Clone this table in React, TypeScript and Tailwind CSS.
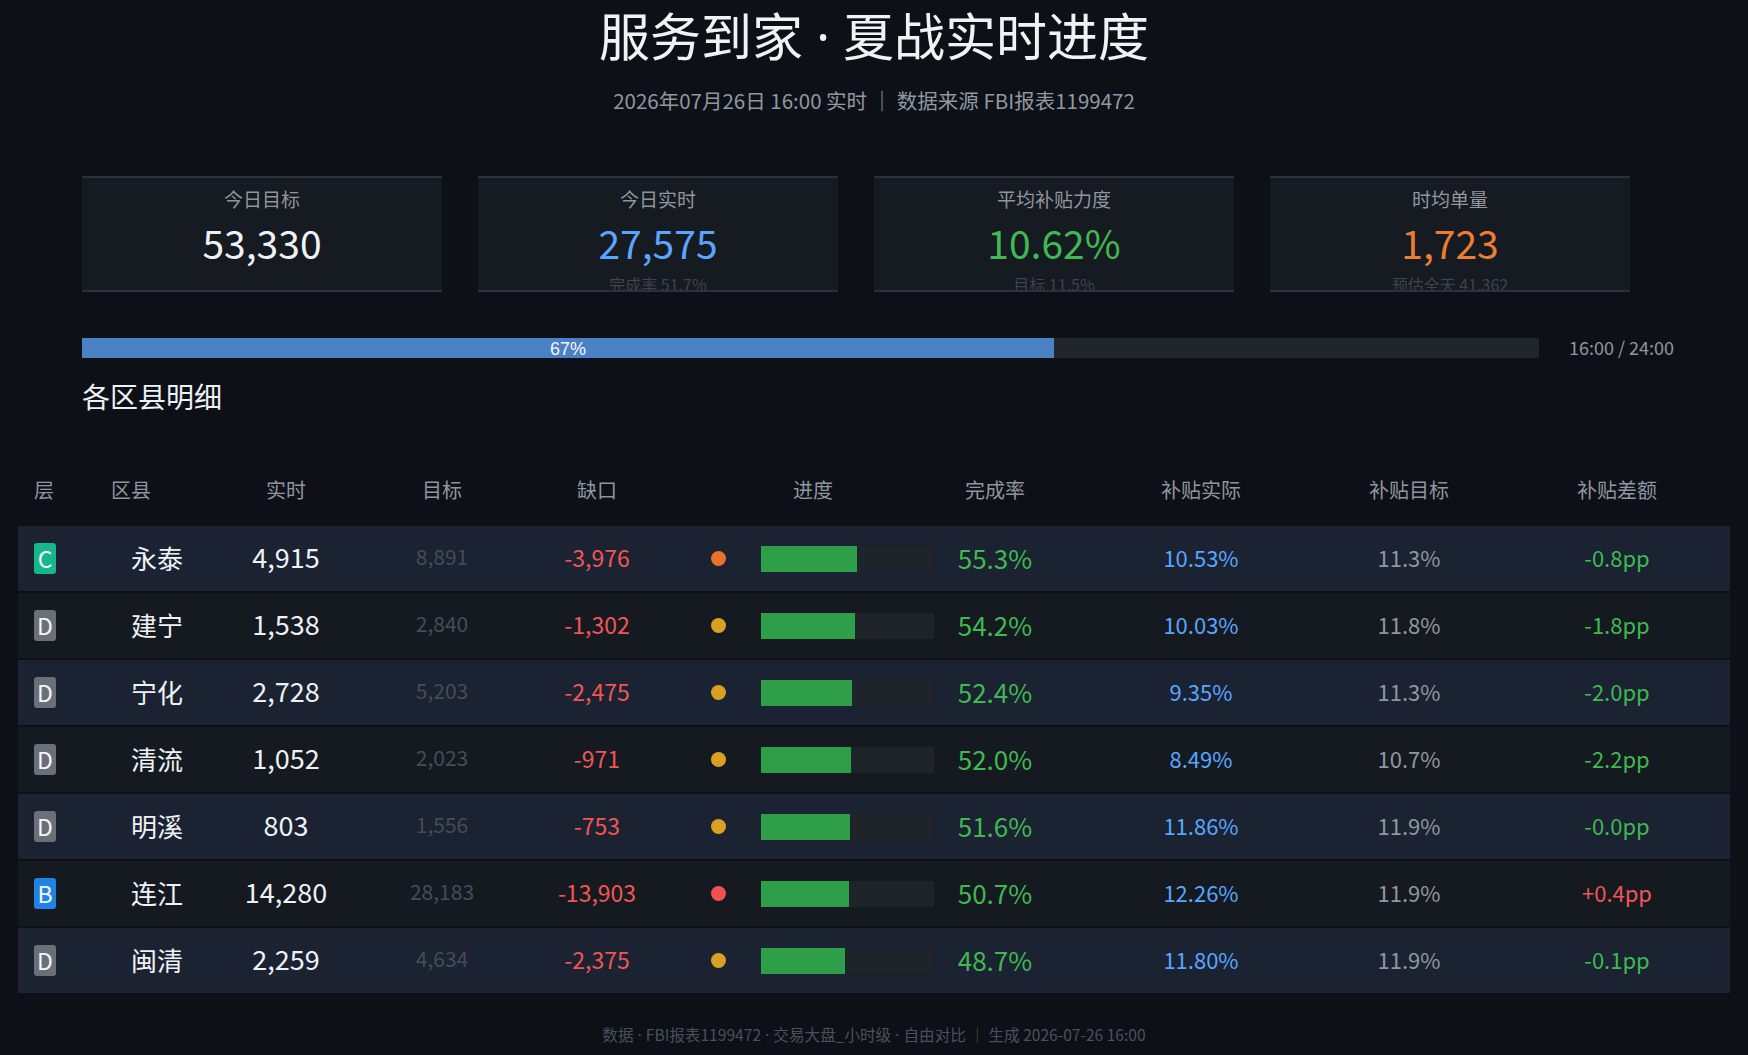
import React from "react";

type Row = {
  tier: "B" | "C" | "D";
  name: string;
  actual: string;
  target: string;
  gap: string;
  dot: string;
  rate: number;
  subActual: string;
  subTarget: string;
  subDiff: string;
  diffUp: boolean;
};

const rows: Row[] = [
  { tier: "C", name: "永泰", actual: "4,915", target: "8,891", gap: "-3,976", dot: "bg-[#e8732a]", rate: 55.3, subActual: "10.53%", subTarget: "11.3%", subDiff: "-0.8pp", diffUp: false },
  { tier: "D", name: "建宁", actual: "1,538", target: "2,840", gap: "-1,302", dot: "bg-[#d9a022]", rate: 54.2, subActual: "10.03%", subTarget: "11.8%", subDiff: "-1.8pp", diffUp: false },
  { tier: "D", name: "宁化", actual: "2,728", target: "5,203", gap: "-2,475", dot: "bg-[#d9a022]", rate: 52.4, subActual: "9.35%", subTarget: "11.3%", subDiff: "-2.0pp", diffUp: false },
  { tier: "D", name: "清流", actual: "1,052", target: "2,023", gap: "-971", dot: "bg-[#d9a022]", rate: 52.0, subActual: "8.49%", subTarget: "10.7%", subDiff: "-2.2pp", diffUp: false },
  { tier: "D", name: "明溪", actual: "803", target: "1,556", gap: "-753", dot: "bg-[#d9a022]", rate: 51.6, subActual: "11.86%", subTarget: "11.9%", subDiff: "-0.0pp", diffUp: false },
  { tier: "B", name: "连江", actual: "14,280", target: "28,183", gap: "-13,903", dot: "bg-[#f45050]", rate: 50.7, subActual: "12.26%", subTarget: "11.9%", subDiff: "+0.4pp", diffUp: true },
  { tier: "D", name: "闽清", actual: "2,259", target: "4,634", gap: "-2,375", dot: "bg-[#d9a022]", rate: 48.7, subActual: "11.80%", subTarget: "11.9%", subDiff: "-0.1pp", diffUp: false },
];

const tierColor: Record<Row["tier"], string> = {
  B: "bg-[#1f83e6]",
  C: "bg-[#17b68c]",
  D: "bg-[#6b7078]",
};

const stats = [
  { label: "今日目标", value: "53,330", color: "text-[#eef1f5]", sub: "" },
  { label: "今日实时", value: "27,575", color: "text-[#58a6ff]", sub: "完成率 51.7%" },
  { label: "平均补贴力度", value: "10.62%", color: "text-[#3fb950]", sub: "目标 11.5%" },
  { label: "时均单量", value: "1,723", color: "text-[#ed7d31]", sub: "预估全天 41,362" },
];

// narrow latin middle dot instead of the full-width CJK one
function Dot() {
  return <span className="font-['Noto_Sans',sans-serif] leading-none"> · </span>;
}

function StatCard({ label, value, color, sub }: (typeof stats)[number]) {
  return (
    <div className="h-[116px] overflow-hidden bg-[#161a21] border-y-2 border-[#2c313a] flex flex-col items-center pt-[9px]">
      <div className="text-[19px] leading-[24px] text-[#8f969f]">{label}</div>
      <div className={`text-[39px] leading-[44px] mt-[9px] ${color}`}>{value}</div>
      <div className="text-[16px] leading-[20px] mt-[10px] text-[#3e444d] whitespace-nowrap">{sub}</div>
    </div>
  );
}

export default function App() {
  return (
    <div className="min-h-screen w-full bg-[#0d1117] text-[#e6edf3] font-['Noto_Sans_CJK_SC',sans-serif] overflow-hidden">
      <h1 className="pt-[4px] text-center text-[51px] leading-[60px] font-normal text-[#f0f3f6]">
        服务到家<Dot />夏战实时进度
      </h1>
      <div className="mt-[22px] text-center text-[20.5px] leading-[28px] text-[#9198a1]">2026年07月26日 16:00 实时 ｜ 数据来源 FBI报表1199472</div>

      <div className="mt-[62px] ml-[82px] grid grid-cols-[repeat(4,360px)] gap-[36px]">
        {stats.map((s) => (
          <StatCard key={s.label} {...s} />
        ))}
      </div>

      <div className="mt-[46px] ml-[82px] flex items-center">
        <div className="w-[1457px] h-[20px] bg-[#21252c] flex">
          <div className="w-[66.7%] h-full bg-[#4a80c4] flex items-center justify-center pt-[2px] font-['Liberation_Sans',sans-serif] text-[18px] leading-[20px] text-[#f2f6fb]">67%</div>
        </div>
        <div className="ml-[30px] -mt-[3px] text-[18px] leading-[20px] text-[#8f969f]">16:00 / 24:00</div>
      </div>

      <div className="mt-[20px] ml-[82px] text-[28px] leading-[36px] text-[#eef1f5]">各区县明细</div>

      <div className="mt-[42px] mx-[18px]">
        <div className="h-[70px] flex items-center pb-[2px] text-[20px] text-[#8f969f]">
          <div className="w-[60px] pl-[16px]">层</div>
          <div className="w-[158px] pl-[33px]">区县</div>
          <div className="w-[100px] text-center">实时</div>
          <div className="w-[212px] text-center">目标</div>
          <div className="w-[98px] text-center">缺口</div>
          <div className="w-[298px] pl-[147px]">进度</div>
          <div className="w-[154px] pr-[52px] text-center">完成率</div>
          <div className="w-[206px] text-center">补贴实际</div>
          <div className="w-[210px] text-center">补贴目标</div>
          <div className="w-[206px] text-center">补贴差额</div>
        </div>

        <div className="flex flex-col gap-[2px]">
          {rows.map((r, i) => (
            <div key={r.name} className={`h-[65px] flex items-center pb-[3px] ${i % 2 === 0 ? "bg-[#1b2231]" : "bg-[#151a21]"}`}>
              <div className="w-[60px] pl-[16px] pt-[3px]">
                <div className={`w-[22px] h-[31px] rounded-[3px] flex items-center justify-center text-[23px] leading-none text-[#f4f6f8] ${tierColor[r.tier]}`}>{r.tier}</div>
              </div>
              <div className="w-[158px] text-center text-[26px] text-[#eef1f5]">{r.name}</div>
              <div className="w-[100px] text-center text-[27px] text-[#eef1f5]">{r.actual}</div>
              <div className="w-[212px] text-center text-[21px] text-[#454c55]">{r.target}</div>
              <div className="w-[98px] text-center text-[23px] text-[#f25555] whitespace-nowrap">{r.gap}</div>
              <div className="w-[298px] pl-[65px] pt-[3px] flex items-center">
                <span className={`w-[15px] h-[15px] rounded-full ${r.dot}`} />
                <div className="ml-[35px] w-[173px] h-[26px] bg-[#1f242b]">
                  <div className="h-full bg-[#2f9e48]" style={{ width: `${r.rate}%` }} />
                </div>
              </div>
              <div className="w-[154px] pr-[52px] text-center text-[26px] text-[#3fb950]">{r.rate.toFixed(1)}%</div>
              <div className="w-[206px] text-center text-[22px] text-[#58a6ff]">{r.subActual}</div>
              <div className="w-[210px] text-center text-[22px] text-[#8f969f]">{r.subTarget}</div>
              <div className={`w-[206px] text-center text-[22px] ${r.diffUp ? "text-[#f25555]" : "text-[#3fb950]"}`}>{r.subDiff}</div>
            </div>
          ))}
        </div>
      </div>

      <div className="mt-[29px] text-center text-[15.6px] leading-[24px] text-[#4a5059]">
        数据<Dot />FBI报表1199472<Dot />交易大盘_小时级<Dot />自由对比 ｜ 生成 2026-07-26 16:00
      </div>
    </div>
  );
}
